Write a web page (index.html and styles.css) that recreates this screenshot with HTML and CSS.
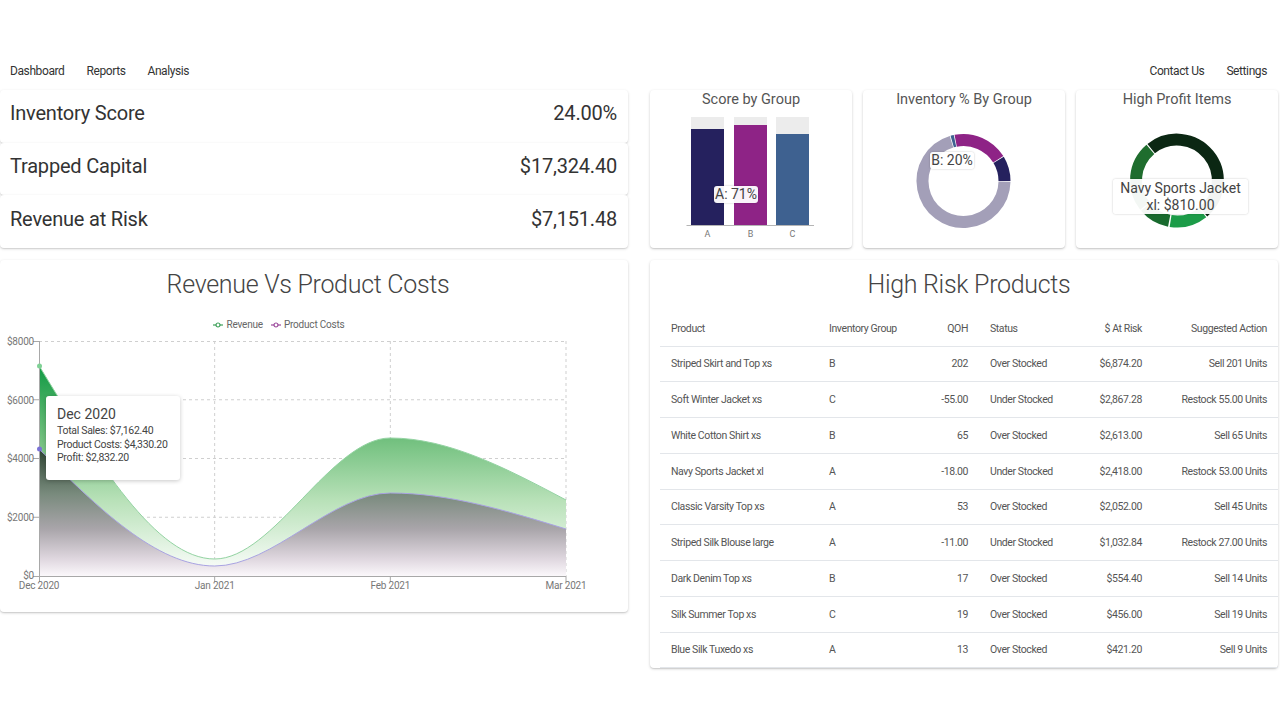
FILE: index.html
```html
<!DOCTYPE html>
<html lang="en">
<head>
<meta charset="utf-8">
<title>Inventory Dashboard</title>
<link rel="stylesheet" href="styles.css">
</head>
<body>
<header class="appbar">
  <nav class="nav nav-left"><a>Dashboard</a><a>Reports</a><a>Analysis</a></nav>
  <nav class="nav nav-right"><a>Contact Us</a><a>Settings</a></nav>
</header>

<main class="grid">
  <section class="kpis">
    <div class="kpi"><span>Inventory Score</span><span>24.00%</span></div>
    <div class="kpi"><span>Trapped Capital</span><span>$17,324.40</span></div>
    <div class="kpi"><span>Revenue at Risk</span><span>$7,151.48</span></div>
  </section>

  <section class="minis">
    <div class="card mini">
      <h3>Score by Group</h3>
      <svg class="mini-svg" width="202" height="136" viewBox="0 0 202 136">
        <rect x="41" y="5" width="33" height="108" fill="#ececec"/>
        <rect x="84" y="5" width="33" height="108" fill="#ececec"/>
        <rect x="126" y="5" width="33" height="108" fill="#ececec"/>
        <rect x="41" y="17" width="33" height="96" fill="#25215e"/>
        <rect x="84" y="13" width="33" height="100" fill="#8e2386"/>
        <rect x="126" y="22" width="33" height="91" fill="#3e6190"/>
        <line x1="36.5" y1="113.5" x2="164" y2="113.5" stroke="#b5b5b5" stroke-width="1"/>
        <text x="57.5" y="125" class="tick" text-anchor="middle">A</text>
        <text x="100.5" y="125" class="tick" text-anchor="middle">B</text>
        <text x="142.5" y="125" class="tick" text-anchor="middle">C</text>
      </svg>
      <div class="tip tip-bar">A: 71%</div>
    </div>
    <div class="card mini">
      <h3>Inventory % By Group</h3>
      <svg class="mini-svg" width="202" height="136" viewBox="0 0 202 136">
        <g fill="none" stroke-width="12">
          <path d="M141.5,69 A41,41 0 0 0 135.64,47.88" stroke="#25215e"/>
          <path d="M135.27,47.27 A41,41 0 0 0 92.68,28.75" stroke="#8e2386"/>
          <path d="M91.98,28.9 A41,41 0 0 0 89.2,29.59" stroke="#3e6190"/>
          <path d="M88.51,29.79 A41,41 0 1 0 141.49,69.72" stroke="#a39fb8"/>
        </g>
      </svg>
      <div class="tip tip-donut">B: 20%</div>
    </div>
    <div class="card mini">
      <h3>High Profit Items</h3>
      <svg class="mini-svg" width="202" height="136" viewBox="0 0 202 136">
        <g fill="none" stroke-width="12">
          <path d="M75.2,36.64 A41,41 0 0 1 127.35,99.91" stroke="#0b2713"/>
          <path d="M126.52,100.59 A41,41 0 0 1 94.59,108.99" stroke="#1c9c48"/>
          <path d="M93.18,108.75 A41,41 0 0 1 69.59,94.85" stroke="#186a2e"/>
          <path d="M68.91,94.02 A41,41 0 0 1 74.37,37.32" stroke="#1f6d2e"/>
        </g>
      </svg>
      <div class="tip tip-profit">Navy Sports Jacket<br>xl: $810.00</div>
    </div>
  </section>

  <section class="card chart-card">
    <h2 class="card-title title-left">Revenue Vs Product Costs</h2>
    <div class="legend">
      <span class="leg-item"><svg width="10" height="8" viewBox="0 0 10 8"><line x1="0" y1="4" x2="10" y2="4" stroke="#3fa05a" stroke-width="1.2"/><circle cx="5" cy="4" r="2" fill="#fff" stroke="#3fa05a" stroke-width="1.2"/></svg>Revenue</span>
      <span class="leg-item"><svg width="10" height="8" viewBox="0 0 10 8"><line x1="0" y1="4" x2="10" y2="4" stroke="#9c4a9c" stroke-width="1.2"/><circle cx="5" cy="4" r="2" fill="#fff" stroke="#9c4a9c" stroke-width="1.2"/></svg>Product Costs</span>
    </div>
    <svg class="area-svg" width="628" height="268" viewBox="0 0 628 268">
      <defs>
        <linearGradient id="gRev" x1="0" y1="0" x2="0" y2="1">
          <stop offset="0" stop-color="#119a44"/>
          <stop offset="0.34" stop-color="#6fbf7c"/>
          <stop offset="0.64" stop-color="#b8e1b8"/>
          <stop offset="1" stop-color="#ffffff"/>
        </linearGradient>
        <linearGradient id="gCost" x1="0" y1="0" x2="0" y2="1">
          <stop offset="0" stop-color="#2d4432"/>
          <stop offset="0.35" stop-color="#788a7c"/>
          <stop offset="0.63" stop-color="#a9a5aa"/>
          <stop offset="0.87" stop-color="#e0d8e0"/>
          <stop offset="1" stop-color="#fbf8fb"/>
        </linearGradient>
      </defs>
      <g stroke="#cfcfcf" stroke-dasharray="3 3" stroke-width="1">
        <line x1="39" y1="9.5" x2="566" y2="9.5"/>
        <line x1="39" y1="67.75" x2="566" y2="67.75"/>
        <line x1="39" y1="126.5" x2="566" y2="126.5"/>
        <line x1="39" y1="185.25" x2="566" y2="185.25"/>
        <line x1="214.67" y1="9" x2="214.67" y2="244"/>
        <line x1="390.33" y1="9" x2="390.33" y2="244"/>
        <line x1="566" y1="9" x2="566" y2="244"/>
      </g>
      <path d="M39,33.6 C97.56,130.27 156.11,227 214.67,227 C273.22,227 331.78,106 390.33,106 C448.89,106 507.44,136.97 566,168 L566,244 L39,244 Z" fill="url(#gRev)"/>
      <path d="M39,33.6 C97.56,130.27 156.11,227 214.67,227 C273.22,227 331.78,106 390.33,106 C448.89,106 507.44,136.97 566,168" fill="none" stroke="#93d3a2" stroke-width="1"/>
      <path d="M39,116.8 C97.56,175.39 156.11,234 214.67,234 C273.22,234 331.78,161 390.33,161 C448.89,161 507.44,179 566,197 L566,244 L39,244 Z" fill="url(#gCost)"/>
      <path d="M39,116.8 C97.56,175.39 156.11,234 214.67,234 C273.22,234 331.78,161 390.33,161 C448.89,161 507.44,179 566,197" fill="none" stroke="#a9a3e2" stroke-width="1"/>
      <g stroke="#a8a8a8" stroke-width="1">
        <line x1="39.5" y1="9" x2="39.5" y2="244"/>
        <line x1="39" y1="244.5" x2="566" y2="244.5"/>
        <line x1="33" y1="9.5" x2="39" y2="9.5"/>
        <line x1="33" y1="67.75" x2="39" y2="67.75"/>
        <line x1="33" y1="126.5" x2="39" y2="126.5"/>
        <line x1="33" y1="185.25" x2="39" y2="185.25"/>
        <line x1="33" y1="244.5" x2="39" y2="244.5"/>
        <line x1="39.5" y1="244" x2="39.5" y2="250"/>
        <line x1="214.67" y1="244" x2="214.67" y2="250"/>
        <line x1="390.33" y1="244" x2="390.33" y2="250"/>
        <line x1="566" y1="244" x2="566" y2="250"/>
      </g>
      <circle cx="39.5" cy="34" r="2.5" fill="#7fd195"/>
      <circle cx="39.5" cy="117" r="2.5" fill="#7b72d6"/>
      <g class="axis-text" text-anchor="end">
        <text x="34" y="13">$8000</text>
        <text x="34" y="71.5">$6000</text>
        <text x="34" y="130">$4000</text>
        <text x="34" y="189">$2000</text>
        <text x="34" y="247">$0</text>
      </g>
      <g class="axis-text" text-anchor="middle">
        <text x="39" y="257">Dec 2020</text>
        <text x="214.67" y="257">Jan 2021</text>
        <text x="390.33" y="257">Feb 2021</text>
        <text x="566" y="257">Mar 2021</text>
      </g>
    </svg>
    <div class="line-tip">
      <div class="lt-title">Dec 2020</div>
      <div class="lt-row">Total Sales: $7,162.40</div>
      <div class="lt-row">Product Costs: $4,330.20</div>
      <div class="lt-row">Profit: $2,832.20</div>
    </div>
  </section>

  <section class="card table-card">
    <h2 class="card-title title-right">High Risk Products</h2>
    <table class="risk">
      <colgroup>
        <col class="c1"><col class="c2"><col class="c3"><col class="c4"><col class="c5"><col class="c6">
      </colgroup>
      <thead>
        <tr><th>Product</th><th>Inventory Group</th><th class="num">QOH</th><th>Status</th><th class="num">$ At Risk</th><th class="num">Suggested Action</th></tr>
      </thead>
      <tbody>
        <tr><td>Striped Skirt and Top xs</td><td>B</td><td class="num">202</td><td>Over Stocked</td><td class="num">$6,874.20</td><td class="num">Sell 201 Units</td></tr>
        <tr><td>Soft Winter Jacket xs</td><td>C</td><td class="num">-55.00</td><td>Under Stocked</td><td class="num">$2,867.28</td><td class="num">Restock 55.00 Units</td></tr>
        <tr><td>White Cotton Shirt xs</td><td>B</td><td class="num">65</td><td>Over Stocked</td><td class="num">$2,613.00</td><td class="num">Sell 65 Units</td></tr>
        <tr><td>Navy Sports Jacket xl</td><td>A</td><td class="num">-18.00</td><td>Under Stocked</td><td class="num">$2,418.00</td><td class="num">Restock 53.00 Units</td></tr>
        <tr><td>Classic Varsity Top xs</td><td>A</td><td class="num">53</td><td>Over Stocked</td><td class="num">$2,052.00</td><td class="num">Sell 45 Units</td></tr>
        <tr><td>Striped Silk Blouse large</td><td>A</td><td class="num">-11.00</td><td>Under Stocked</td><td class="num">$1,032.84</td><td class="num">Restock 27.00 Units</td></tr>
        <tr><td>Dark Denim Top xs</td><td>B</td><td class="num">17</td><td>Over Stocked</td><td class="num">$554.40</td><td class="num">Sell 14 Units</td></tr>
        <tr><td>Silk Summer Top xs</td><td>C</td><td class="num">19</td><td>Over Stocked</td><td class="num">$456.00</td><td class="num">Sell 19 Units</td></tr>
        <tr><td>Blue Silk Tuxedo xs</td><td>A</td><td class="num">13</td><td>Over Stocked</td><td class="num">$421.20</td><td class="num">Sell 9 Units</td></tr>
      </tbody>
    </table>
  </section>
</main>
</body>
</html>
```

FILE: styles.css
```css
* { box-sizing: border-box; }

html, body {
  margin: 0;
  padding: 0;
  background: #ffffff;
}

body {
  font-family: Roboto, "Noto Sans", "Liberation Sans", sans-serif;
  color: #333;
  width: 1280px;
  height: 720px;
  overflow: hidden;
}

/* ---------- App bar ---------- */
.appbar {
  display: flex;
  justify-content: space-between;
  align-items: center;
  height: 90px;
  padding: 51px 13px 0 10px;
}

.nav {
  display: flex;
  gap: 22px;
}

.nav a {
  font-size: 12px;
  letter-spacing: -0.4px;
  color: #333;
  cursor: pointer;
}

/* ---------- Grid ---------- */
.grid {
  display: grid;
  grid-template-columns: 628px 628px;
  grid-template-rows: 158px auto;
  column-gap: 22px;
  row-gap: 12px;
  width: 1278px;
}

.card {
  background: #fff;
  border-radius: 4px;
  box-shadow: 0 1px 3px rgba(0, 0, 0, 0.18), 0 1px 1px rgba(0, 0, 0, 0.08);
  position: relative;
}

/* ---------- KPIs ---------- */
.kpis {
  display: flex;
  flex-direction: column;
}

.kpi {
  flex: 1;
  display: flex;
  justify-content: space-between;
  align-items: center;
  padding: 0 11px 6px 10px;
  font-size: 20px;
  letter-spacing: -0.2px;
  color: #333;
  background: #fff;
  border-radius: 4px;
  box-shadow: 0 1px 3px rgba(0, 0, 0, 0.16), 0 1px 1px rgba(0, 0, 0, 0.07);
}

/* ---------- Mini charts ---------- */
.minis {
  display: grid;
  grid-template-columns: repeat(3, 202px);
  column-gap: 11px;
}

.mini h3 {
  margin: 0;
  height: 22px;
  line-height: 20px;
  font-size: 14.5px;
  font-weight: 400;
  color: #555;
  text-align: center;
}

.mini-svg {
  display: block;
}

.tick {
  font-size: 9px;
  fill: #777;
  font-family: Roboto, sans-serif;
}

.tip {
  position: absolute;
  background: rgba(255, 255, 255, 0.95);
  border-radius: 3px;
  box-shadow: 0 0 2px rgba(0, 0, 0, 0.25);
  font-size: 14px;
  color: #444;
  text-align: center;
  white-space: nowrap;
}

.tip-bar {
  left: 64px;
  top: 96px;
  width: 44px;
  height: 17px;
  line-height: 17px;
}

.tip-donut {
  left: 67px;
  top: 62px;
  width: 44px;
  height: 17px;
  line-height: 17px;
}

.tip-profit {
  left: 37px;
  top: 89px;
  width: 135px;
  height: 35px;
  line-height: 17px;
  padding-top: 1px;
}

/* ---------- Area chart ---------- */
.card-title {
  margin: 0;
  padding-top: 10px;
  font-size: 25px;
  line-height: 30px;
  font-weight: 300;
  letter-spacing: -0.3px;
  color: #444;
  text-align: center;
}

.title-left { padding-right: 12px; }
.title-right { padding-left: 10px; }

.chart-card {
  height: 352px;
}

.legend {
  margin-top: 17px;
  height: 15px;
  display: flex;
  justify-content: center;
  gap: 8px;
  padding-right: 70px;
  font-size: 10px;
  letter-spacing: -0.2px;
  line-height: 15px;
  color: #666;
}

.leg-item {
  display: inline-flex;
  align-items: center;
  gap: 3px;
}

.area-svg {
  display: block;
}

.axis-text text {
  font-family: Roboto, sans-serif;
  font-size: 10px;
  letter-spacing: -0.2px;
  fill: #777;
}

.line-tip {
  position: absolute;
  left: 46px;
  top: 136px;
  width: 134px;
  height: 84px;
  padding: 10px 6px 0 11px;
  background: #fff;
  border-radius: 3px;
  box-shadow: 0 1px 4px rgba(0, 0, 0, 0.22);
  color: #444;
  white-space: nowrap;
}

.lt-title {
  font-size: 14px;
  line-height: 16px;
  margin-bottom: 2px;
}

.lt-row {
  font-size: 10.5px;
  line-height: 13.5px;
  letter-spacing: -0.3px;
}

/* ---------- Table ---------- */
.table-card {
  height: 408px;
}

.risk {
  margin: 10px 0 0 10px;
  width: 618px;
  border-collapse: collapse;
  table-layout: fixed;
  font-size: 10.5px;
  letter-spacing: -0.4px;
  color: #555;
}

.c1 { width: 158px; }
.c2 { width: 82px; }
.c3 { width: 79px; }
.c4 { width: 81px; }
.c5 { width: 93px; }
.c6 { width: 125px; }

.risk th,
.risk td {
  padding: 0 11px;
  border-bottom: 1px solid #e3e6ea;
  text-align: left;
  font-weight: 400;
  white-space: nowrap;
}

.risk th {
  height: 36px;
  padding-top: 2px;
}

.risk td {
  height: 35.75px;
}

.risk .num {
  text-align: right;
}
```
